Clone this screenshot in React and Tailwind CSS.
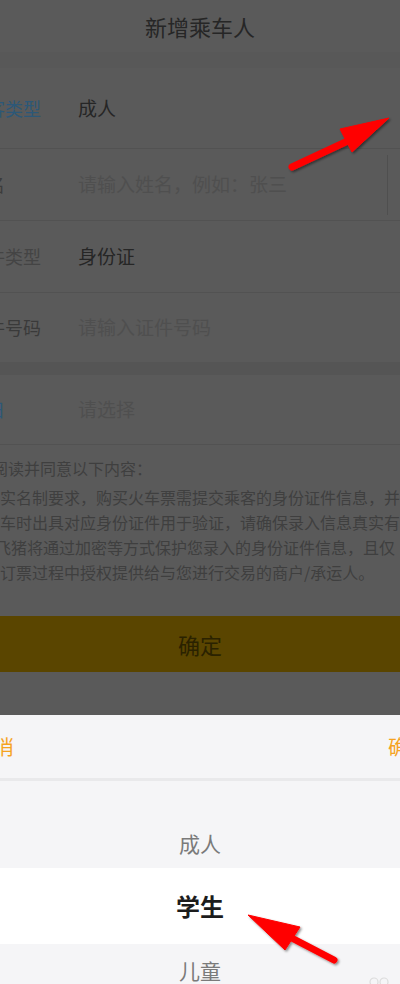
import React from 'react'

const font = { fontFamily: '"Noto Sans CJK SC", "Noto Sans", sans-serif' }

function Row({ label, labelClass, value, valueClass, h, divider, last }) {
  return (
    <div className={`flex items-center ${h} ${last ? '' : 'border-b border-[#525252]'}`}>
      <div className={`-ml-[31px] w-[109px] shrink-0 whitespace-nowrap text-[18px] ${labelClass}`}>{label}</div>
      <div className={`flex-1 whitespace-nowrap text-[19px] ${valueClass}`}>{value}</div>
      {divider && <div className="mr-[12px] h-[60px] w-px bg-[#4f4f4f]" />}
    </div>
  )
}

function Arrows() {
  return (
    <svg className="pointer-events-none absolute inset-0" width="400" height="984" viewBox="0 0 400 984">
      <defs>
        <filter id="sh" x="-20%" y="-20%" width="140%" height="140%">
          <feDropShadow dx="1.5" dy="1.5" stdDeviation="1.2" floodColor="#000" floodOpacity="0.45" />
        </filter>
      </defs>
      <g filter="url(#sh)" fill="#ff0000" stroke="#ff0000">
        <line x1="292" y1="167" x2="352" y2="139" strokeWidth="7" strokeLinecap="round" />
        <polygon points="389,118 340,129 352,152" strokeWidth="1" strokeLinejoin="round" />
      </g>
      <g filter="url(#sh)" fill="#ff0000" stroke="#ff0000">
        <line x1="334" y1="960" x2="284" y2="934" strokeWidth="7" strokeLinecap="round" />
        <polygon points="248,915 300,927 285,950" strokeWidth="1" strokeLinejoin="round" />
      </g>
    </svg>
  )
}

export default function App() {
  return (
    <div className="relative h-[984px] w-[400px] overflow-hidden bg-[#5a5a5a]" style={font}>
      {/* dimmed form */}
      <div className="flex h-[715px] flex-col">
        <div className="flex h-[52px] items-center justify-center text-[22px] text-[#262626]">新增乘车人</div>
        <div className="h-[16px] bg-[#585858]" />
        <Row h="h-[81px]" label="乘客类型" labelClass="text-[#2c5878]" value="成人" valueClass="text-[#262626]" />
        <Row h="h-[72px]" label="姓名" labelClass="text-[#3c3c3c]" value="请输入姓名，例如：张三" valueClass="text-[#4f4f4f]" divider />
        <Row h="h-[72px]" label="证件类型" labelClass="text-[#444]" value="身份证" valueClass="text-[#262626]" />
        <Row h="h-[69px]" label="证件号码" labelClass="text-[#3a3a3a]" value="请输入证件号码" valueClass="text-[#4f4f4f]" last />
        <div className="h-[13px] bg-[#555555]" />
        <Row h="h-[70px]" label="生日" labelClass="text-[#2c5878]" value="请选择" valueClass="text-[#4f4f4f]" />

        <div className="pt-[11px] text-[16px] text-[#3f3f3f]">
          <div className="-ml-[24px] whitespace-nowrap leading-[24px]">请阅读并同意以下内容：</div>
          <div className="mt-[5px] whitespace-nowrap leading-[25px]">实名制要求，购买火车票需提交乘客的身份证件信息，并</div>
          <div className="whitespace-nowrap leading-[25px]">车时出具对应身份证件用于验证，请确保录入信息真实有</div>
          <div className="-ml-[5px] whitespace-nowrap leading-[25px]">飞猪将通过加密等方式保护您录入的身份证件信息，且仅</div>
          <div className="whitespace-nowrap leading-[25px]">订票过程中授权提供给与您进行交易的商户/承运人。</div>
        </div>

        <div className="mt-auto mb-[43px] flex h-[56px] items-center justify-center bg-[#5a4500] text-[22px] text-[#2a2200]">确定</div>
      </div>

      {/* picker sheet */}
      <div className="flex h-[269px] flex-col bg-[#f5f5f7]">
        <div className="flex h-[66px] items-center justify-between border-b-[3px] border-[#e9e9eb] text-[20px] text-[#f5a31f]">
          <span className="-ml-[26px] whitespace-nowrap">取消</span>
          <span className="-mr-[28px] whitespace-nowrap">确定</span>
        </div>
        <div className="flex h-[87px] shrink-0 items-end justify-center pb-[13px] text-[21px] leading-[24px] text-[#7a7a7a]">成人</div>
        <div className="flex h-[76px] shrink-0 items-center justify-center bg-white text-[24px] font-semibold text-[#1c1c1c]">学生</div>
        <div className="flex justify-center pt-[14px] text-[21px] leading-[24px] text-[#7a7a7a]">儿童</div>
      </div>

      <svg className="absolute left-[368px] top-[974px]" width="26" height="12" viewBox="0 0 26 12">
        <circle cx="6" cy="8" r="4" fill="none" stroke="#dcdcdc" strokeWidth="1.2" />
        <circle cx="16" cy="8" r="4" fill="none" stroke="#dcdcdc" strokeWidth="1.2" />
      </svg>

      <Arrows />
    </div>
  )
}
